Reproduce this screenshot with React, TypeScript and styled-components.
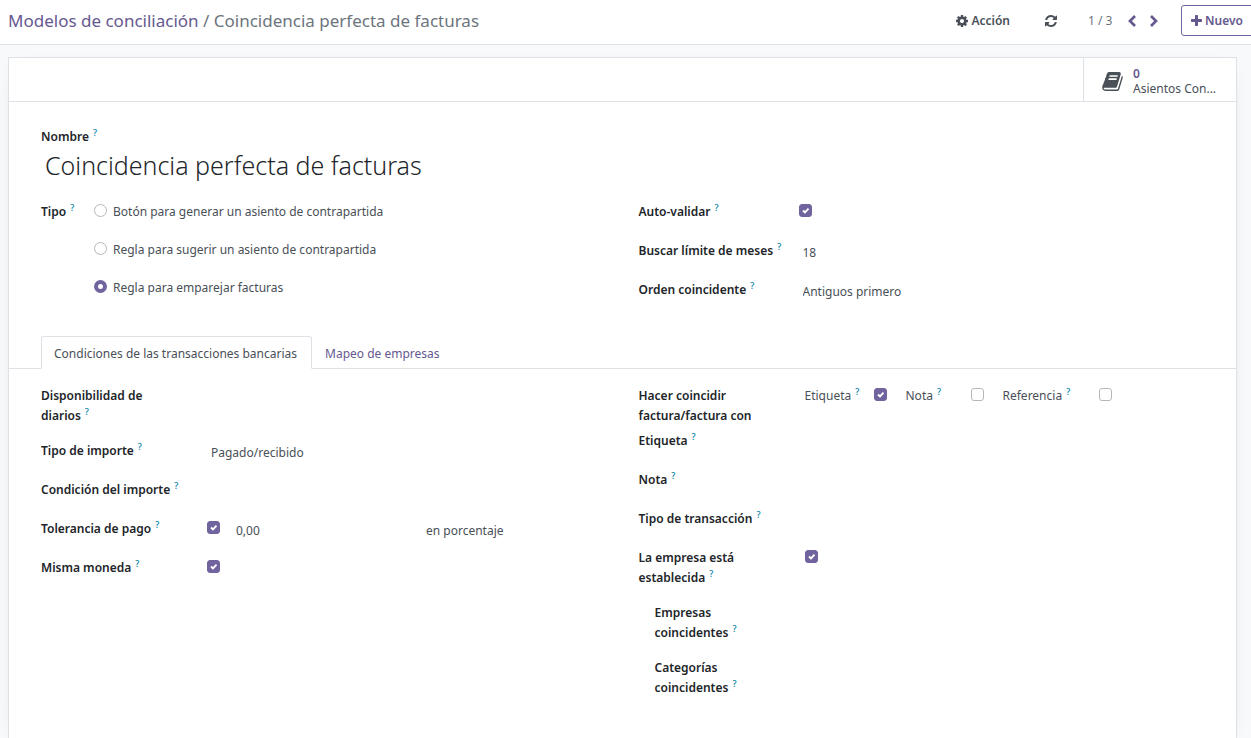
import React, { useState } from "react";
import styled, { createGlobalStyle, css } from "styled-components";

const purple = "#71639e";
const link = "#66598f";
const line = "#dee2e6";
const ink = "#212529";
const body = "#495057";

const GlobalStyle = createGlobalStyle`
  *, *::before, *::after { box-sizing: border-box; }
  body {
    margin: 0;
    background: #f8f9fa;
    color: ${body};
    font: 400 12px/20px "Noto Sans", "Open Sans", sans-serif;
  }
  button, input, select { font: inherit; color: inherit; margin: 0; }
`;

const Page = styled.div`
  min-height: 100vh;
  display: flex;
  flex-direction: column;
  overflow: hidden;
`;

const ControlPanel = styled.header`
  display: flex;
  align-items: center;
  height: 45px;
  padding: 0 0 3px 8px;
  background: #fff;
  border-bottom: 1px solid ${line};
  white-space: nowrap;
`;

const Breadcrumb = styled.nav`
  flex: 1;
  font-size: 17px;
  line-height: 24px;
  color: #6c757d;
  a { color: ${link}; text-decoration: none; }
`;

const Actions = styled.div`
  display: flex;
  align-items: center;
  flex: none;
  margin-right: -8px;
`;

const PlainButton = styled.button`
  display: inline-flex;
  align-items: center;
  gap: 3px;
  padding: 0;
  border: 0;
  background: none;
  color: ${body};
  font-weight: 600;
  cursor: pointer;
`;

const Pager = styled.div`
  display: flex;
  align-items: center;
  gap: 12px;
  margin: 0 22px 0 31px;
`;

const PagerButton = styled(PlainButton)`
  color: ${link};
`;

const PagerCount = styled.span`
  min-width: 27px;
  color: #6c757d;
`;

const NewButton = styled(PlainButton)`
  width: 78px;
  height: 31px;
  padding: 0 0 0 9px;
  border: 1px solid ${purple};
  border-radius: 3px;
  color: ${link};
`;

const RefreshButton = styled(PlainButton)`
  margin-left: 35px;
`;

const Sheet = styled.main`
  flex: 1;
  margin: 12px 14px 0 8px;
  background: #fff;
  border: 1px solid ${line};
  border-bottom: 0;
  box-shadow: 0 5px 20px -15px rgba(0, 0, 0, 0.4);
`;

const ButtonBox = styled.div`
  display: flex;
  justify-content: flex-end;
  height: 44px;
  border-bottom: 1px solid ${line};
`;

const StatButton = styled.button`
  display: flex;
  align-items: center;
  gap: 10px;
  width: 153px;
  padding: 3px 0 0 18px;
  border: 0;
  border-left: 1px solid ${line};
  background: none;
  text-align: left;
  line-height: 15px;
  cursor: pointer;
`;

const StatValue = styled.span`
  display: block;
  color: ${link};
  font-weight: 600;
`;

const TitleBlock = styled.div`
  padding: 25px 32px 0;
`;

const TitleInput = styled.input`
  display: block;
  width: 100%;
  height: 40px;
  padding: 0 4px 4px;
  border: 0;
  outline: 0;
  background: none;
  color: ${ink};
  font-size: 25px;
  font-weight: 300;
`;

const Columns = styled.div`
  display: grid;
  grid-template-columns: 1fr 1fr;
  gap: 32px;
  padding: 15px 32px 0;
`;

const TabPanel = styled(Columns)`
  padding-top: 17px;
`;

const Fields = styled.div`
  display: flex;
  flex-direction: column;
  gap: 15px;
`;

const Field = styled.div<{ $label?: number; $tight?: boolean }>`
  display: grid;
  grid-template-columns: ${(p) => p.$label ?? 166}px 1fr;
  min-height: 24px;
  ${(p) => p.$tight && css`margin-bottom: -10px;`}
`;

const LabelCell = styled.div<{ $indent?: boolean }>`
  max-width: 148px;
  padding-left: ${(p) => (p.$indent ? 16 : 0)}px;
  color: ${ink};
  font-weight: 600;
`;

const LabelText = styled.label`
  display: block;
`;

const HelpMark = styled.sup`
  margin-left: 4px;
  color: #0180a5;
  font-size: 9px;
  font-weight: 500;
  line-height: 0;
  vertical-align: 5px;
`;

const ValueCell = styled.div`
  display: flex;
  align-items: flex-start;
`;

const TextInput = styled.input<{ $width?: number }>`
  height: 22px;
  width: ${(p) => (p.$width ? `${p.$width}px` : "100%")};
  padding: 0 4px;
  border: 0;
  outline: 0;
  background: none;
`;

const Select = styled.select`
  appearance: none;
  height: 24px;
  padding: 0 4px;
  border: 0;
  outline: 0;
  background: none;
`;

const check = `url("data:image/svg+xml,%3Csvg xmlns='http://www.w3.org/2000/svg' viewBox='0 0 13 13'%3E%3Cpath d='M4 6.500l2 2 3.500-3.800' fill='none' stroke='%23fff' stroke-width='1.900'/%3E%3C/svg%3E")`;

const Checkbox = styled.input.attrs({ type: "checkbox" })`
  appearance: none;
  flex: none;
  width: 13px;
  height: 13px;
  margin-top: 2px;
  border: 1px solid #b5b8bb;
  border-radius: 3px;
  background: #fff;
  &:checked {
    border-color: ${purple};
    background: ${purple} ${check} center / 13px no-repeat;
  }
`;

const ToleranceInput = styled(TextInput)`
  margin-left: 12px;
`;

const RadioField = styled.div`
  display: grid;
  grid-template-columns: 53px 1fr;
`;

const RadioList = styled.div`
  display: flex;
  flex-direction: column;
  gap: 18px;
`;

const RadioLabel = styled.label`
  display: flex;
  gap: 6px;
`;

const Radio = styled.input.attrs({ type: "radio" })`
  appearance: none;
  flex: none;
  width: 13px;
  height: 13px;
  margin-top: 2px;
  border: 1px solid #b5b8bb;
  border-radius: 50%;
  background: #fff;
  &:checked { border: 4px solid ${purple}; }
`;

const Tabs = styled.div`
  display: flex;
  margin-top: 32px;
  padding: 0 32px;
  border-bottom: 1px solid ${line};
`;

const Tab = styled.button<{ $active?: boolean }>`
  height: 33px;
  margin-bottom: -1px;
  padding: 2px 14px 0 12px;
  border: 1px solid transparent;
  border-radius: 3px 3px 0 0;
  background: none;
  color: ${link};
  cursor: pointer;
  ${(p) => p.$active && css`
    border-color: ${line} ${line} #fff;
    background: #fff;
    color: ${body};
  `}
`;

const MatchOptions = styled.div`
  display: flex;
  gap: 19px;
`;

const MatchOption = styled.div<{ $label: number }>`
  display: grid;
  grid-template-columns: ${(p) => p.$label}px 13px;
`;

type IconProps = { d: string; box: string; width: number; height: number };
const Icon = ({ d, box, width, height }: IconProps) => (
  <svg width={width} height={height} viewBox={box} fill="currentColor" aria-hidden="true">
    <path d={d} />
  </svg>
);

const COG = "M1024 768q0-106-75-181t-181-75-181 75-75 181 75 181 181 75 181-75 75-181zm512-109v222q0 12-8 23t-20 13l-185 28q-19 54-39 91 35 50 107 138 10 12 10 25t-9 23q-27 37-99 108t-94 71q-12 0-26-9l-138-108q-44 23-91 38-16 136-29 186-7 28-36 28h-222q-14 0-24.5-8.5t-11.5-21.5l-28-184q-49-16-90-37l-141 107q-10 9-25 9-14 0-25-11-126-114-165-168-7-10-7-23 0-12 8-23 15-21 51-66.5t54-70.5q-27-50-41-99l-183-27q-13-2-21-12.5t-8-23.5v-222q0-12 8-23t19-13l186-28q14-46 39-92-40-57-107-138-10-12-10-24 0-10 9-23 26-36 98.500-107.500t94.500-71.500q13 0 26 10l138 107q44-23 91-38 16-136 29-186 7-28 36-28h222q14 0 24.500 8.500t11.500 21.500l28 184q49 16 90 37l142-107q9-9 24-9 13 0 25 10 129 119 165 170 7 8 7 22 0 12-8 23-15 21-51 66.500t-54 70.500q26 50 41 98l183 28q13 2 21 12.500t8 23.500z";
const REFRESH = "M1511 928q0 5-1 7-64 268-268 434.500t-478 166.500q-146 0-282.500-55t-243.500-157l-129 129q-19 19-45 19t-45-19-19-45v-448q0-26 19-45t45-19h448q26 0 45 19t19 45-19 45l-137 137q71 66 161 102t187 36q134 0 250-65t186-179q11-17 53-117 8-23 30-23h192q13 0 22.500 9.500t9.500 22.500zm25-800v448q0 26-19 45t-45 19h-448q-26 0-45-19t-19-45 19-45l138-138q-148-137-349-137-134 0-250 65t-186 179q-11 17-53 117-8 23-30 23h-199q-13 0-22.500-9.500t-9.500-22.500v-7q65-268 270-434.500t480-166.500q146 0 284 55.500t245 156.500l130-129q19-19 45-19t45 19 19 45z";
const PLUS = "M1408 608v192q0 40-28 68t-68 28h-416v416q0 40-28 68t-68 28h-192q-40 0-68-28t-28-68v-416h-416q-40 0-68-28t-28-68v-192q0-40 28-68t68-28h416v-416q0-40 28-68t68-28h192q40 0 68 28t28 68v416h416q40 0 68 28t28 68z";
const BOOK = "M1639 478q40 57 18 129l-275 906q-19 64-76.500 107.500t-122.500 43.500h-923q-77 0-148.500-53.500t-99.500-131.500q-24-67-2-127 0-4 3-27t4-37q1-8-3-21.500t-3-19.500q2-11 8-21t16.500-23.500 16.500-23.500q23-38 45-91.500t30-91.500q3-10 .5-30t-.5-28q3-11 17-28t17-23q21-36 42-92t25-90q1-9-2.500-32t.5-28q4-13 22-30.500t22-22.500q19-26 42.500-84.500t27.500-96.500q1-8-3-25.500t-2-26.500q2-8 9-18t18-23 17-21q8-12 16.500-30.500t15-35 16-36 19.500-32 26.500-23.500 36-11.500 47.500 5.500l-1 3q38-9 51-9h761q74 0 114 56t18 130l-274 906q-36 119-71.500 153.500t-128.500 34.500h-869q-27 0-38 15-11 16-1 43 24 70 144 70h923q29 0 56-15.500t35-41.500l300-987q7-22 5-57 38 15 59 43zm-1064 2q-4 13 2 22.500t20 9.500h608q13 0 25.500-9.500t16.500-22.500l21-64q4-13-2-22.500t-20-9.500h-608q-13 0-25.500 9.500t-16.500 22.500zm-83 256q-4 13 2 22.500t20 9.500h608q13 0 25.500-9.500t16.500-22.500l21-64q4-13-2-22.500t-20-9.500h-608q-13 0-25.500 9.500t-16.500 22.500z";

const Chevron = ({ d }: { d: string }) => (
  <svg width="10" height="12" viewBox="0 0 10 12" fill="none" stroke="currentColor" strokeWidth="2.700" aria-hidden="true">
    <path d={d} />
  </svg>
);

const Help = () => <HelpMark>?</HelpMark>;

type LabelProps = { text: string; htmlFor?: string; help?: boolean; indent?: boolean };
const Label = ({ text, htmlFor, help = true, indent }: LabelProps) => (
  <LabelCell $indent={indent}>
    <LabelText htmlFor={htmlFor}>
      {text}
      {help && <Help />}
    </LabelText>
  </LabelCell>
);

const types = [
  "Botón para generar un asiento de contrapartida",
  "Regla para sugerir un asiento de contrapartida",
  "Regla para emparejar facturas",
];

const matches = [
  { text: "Etiqueta", width: 69, on: true },
  { text: "Nota", width: 65, on: false },
  { text: "Referencia", width: 96, on: false },
];

export default function App() {
  const [type, setType] = useState(2);
  return (
    <Page>
      <GlobalStyle />
      <ControlPanel>
        <Breadcrumb aria-label="Ruta">
          <a href="#modelos">Modelos de conciliación</a> / Coincidencia perfecta de facturas
        </Breadcrumb>
        <Actions>
          <PlainButton>
            <Icon d={COG} box="0 0 1536 1536" width={12} height={12} />
            Acción
          </PlainButton>
          <RefreshButton aria-label="Actualizar">
            <Icon d={REFRESH} box="0 0 1536 1536" width={12} height={12} />
          </RefreshButton>
          <Pager>
            <PagerCount>1 / 3</PagerCount>
            <PagerButton aria-label="Anterior">
              <Chevron d="M8 1L3 6l5 5" />
            </PagerButton>
            <PagerButton aria-label="Siguiente">
              <Chevron d="M2 1l5 5-5 5" />
            </PagerButton>
          </Pager>
          <NewButton>
            <Icon d={PLUS} box="0 0 1408 1408" width={11} height={11} />
            Nuevo
          </NewButton>
        </Actions>
      </ControlPanel>

      <Sheet>
        <ButtonBox>
          <StatButton>
            <Icon d={BOOK} box="0 128 1664 1536" width={21} height={19} />
            <span>
              <StatValue>0</StatValue>
              Asientos Con...
            </span>
          </StatButton>
        </ButtonBox>

        <TitleBlock>
          <Label text="Nombre" htmlFor="name" />
          <TitleInput id="name" defaultValue="Coincidencia perfecta de facturas" />
        </TitleBlock>

        <Columns>
          <RadioField role="radiogroup" aria-label="Tipo">
            <Label text="Tipo" htmlFor="type-0" />
            <RadioList>
              {types.map((t, i) => (
                <RadioLabel key={t}>
                  <Radio id={`type-${i}`} name="type" checked={type === i} onChange={() => setType(i)} />
                  {t}
                </RadioLabel>
              ))}
            </RadioList>
          </RadioField>
          <Fields>
            <Field $label={160}>
              <Label text="Auto-validar" htmlFor="auto" />
              <ValueCell><Checkbox id="auto" defaultChecked /></ValueCell>
            </Field>
            <Field $label={160}>
              <Label text="Buscar límite de meses" htmlFor="months" />
              <ValueCell><TextInput id="months" defaultValue="18" /></ValueCell>
            </Field>
            <Field $label={160}>
              <Label text="Orden coincidente" htmlFor="order" />
              <ValueCell>
                <Select id="order"><option>Antiguos primero</option></Select>
              </ValueCell>
            </Field>
          </Fields>
        </Columns>

        <Tabs role="tablist">
          <Tab role="tab" aria-selected="true" $active>Condiciones de las transacciones bancarias</Tab>
          <Tab role="tab" aria-selected="false">Mapeo de empresas</Tab>
        </Tabs>

        <TabPanel role="tabpanel">
          <Fields>
            <Field>
              <Label text="Disponibilidad de diarios" />
            </Field>
            <Field>
              <Label text="Tipo de importe" htmlFor="amount-type" />
              <ValueCell>
                <Select id="amount-type"><option>Pagado/recibido</option></Select>
              </ValueCell>
            </Field>
            <Field>
              <Label text="Condición del importe" />
            </Field>
            <Field>
              <Label text="Tolerancia de pago" htmlFor="tolerance" />
              <ValueCell>
                <Checkbox id="tolerance" defaultChecked />
                <ToleranceInput $width={190} aria-label="Tolerancia" defaultValue="0,00" />
                <Select aria-label="Tipo de tolerancia"><option>en porcentaje</option></Select>
              </ValueCell>
            </Field>
            <Field>
              <Label text="Misma moneda" htmlFor="currency" />
              <ValueCell><Checkbox id="currency" defaultChecked /></ValueCell>
            </Field>
          </Fields>

          <Fields>
            <Field $tight>
              <Label text="Hacer coincidir factura/factura con" help={false} />
              <MatchOptions>
                {matches.map((m) => (
                  <MatchOption key={m.text} $label={m.width}>
                    <label htmlFor={`match-${m.text}`}>{m.text}<Help /></label>
                    <Checkbox id={`match-${m.text}`} defaultChecked={m.on} />
                  </MatchOption>
                ))}
              </MatchOptions>
            </Field>
            <Field><Label text="Etiqueta" /></Field>
            <Field><Label text="Nota" /></Field>
            <Field><Label text="Tipo de transacción" /></Field>
            <Field>
              <Label text="La empresa está establecida" htmlFor="partner" />
              <ValueCell><Checkbox id="partner" defaultChecked /></ValueCell>
            </Field>
            <Field><Label text="Empresas coincidentes" indent /></Field>
            <Field><Label text="Categorías coincidentes" indent /></Field>
          </Fields>
        </TabPanel>
      </Sheet>
    </Page>
  );
}
